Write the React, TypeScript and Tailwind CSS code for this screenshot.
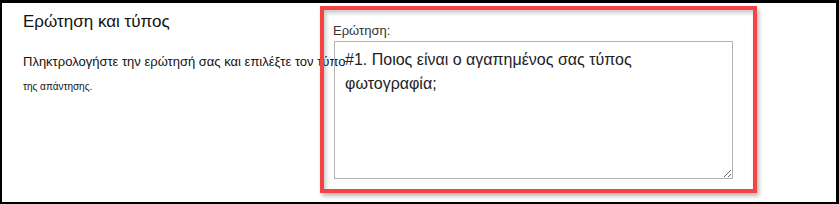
import React from "react";

export default function App() {
  return (
    <div className="w-[839px] h-[204px] bg-white border-black border-t-[3px] border-l-2 border-r-[3px] border-b-2 flex font-['Liberation_Sans',Arial,sans-serif] overflow-hidden">
      <div className="w-[318px] shrink-0 pl-[21px] pt-[9px] whitespace-nowrap">
        <div className="text-[17px] leading-[19px] text-[#111]">Ερώτηση και τύπος</div>
        <div className="mt-[23px] text-[13px] leading-[15px] text-[#111]">
          Πληκτρολογήστε την ερώτησή σας και επιλέξτε τον τύπο
        </div>
        <div className="mt-[12px] text-[10px] leading-[11px] text-[#111]">της απάντησης.</div>
      </div>
      <div className="w-[437px] h-[187px] mt-[3px] shrink-0 border-4 border-[#f44444] shadow-[2px_3px_4px_rgba(0,0,0,0.28),inset_2px_3px_4px_rgba(0,0,0,0.22)] pl-[10px] pt-[13px]">
        <div className="-ml-[1px] text-[13px] leading-[15px] text-[#333]">Ερώτηση:</div>
        <textarea
          className="block mt-[3px] w-[399px] h-[138px] border border-[#b3b3b3] bg-transparent pl-[10px] pr-[60px] pt-[6px] text-[16px] leading-[24px] text-[#222] outline-none font-['Liberation_Sans',Arial,sans-serif]"
          defaultValue="#1. Ποιος είναι ο αγαπημένος σας τύπος φωτογραφία;"
        />
      </div>
    </div>
  );
}
